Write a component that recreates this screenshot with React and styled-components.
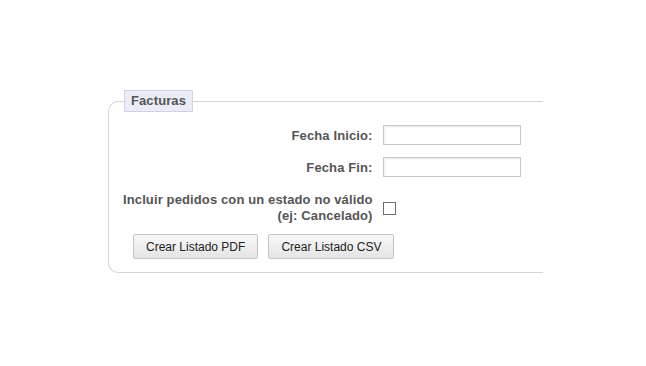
import React from "react";
import styled, { createGlobalStyle } from "styled-components";

const Global = createGlobalStyle`
  html, body { margin: 0; padding: 0; background: #fff; }
  body { font-family: "Liberation Sans", Arial, sans-serif; }
`;

const Page = styled.div`
  padding: 90px 0 0 108px;
`;

const Fieldset = styled.fieldset`
  width: 435px;
  box-sizing: border-box;
  margin: 0;
  padding: 0 0 13px 15px;
  border: 1px solid #d4d4d4;
  border-right: none;
  border-radius: 10px 0 0 10px;
`;

const Legend = styled.legend`
  padding: 2px 6px 3px 6px;
  background: #eaedf5;
  border: 1px solid #cdd3e3;
  color: #555;
  font-size: 13px;
  font-weight: bold;
  line-height: 15px;
  letter-spacing: 0.1px;
`;

const Grid = styled.div`
  display: grid;
  grid-template-columns: max-content auto;
  column-gap: 10px;
  row-gap: 12px;
  align-items: center;
  padding-top: 13px;
  margin-left: -1px;
`;

const Label = styled.label`
  text-align: right;
  color: #555;
  font-size: 13px;
  font-weight: bold;
  line-height: ${(p) => (p.$multi ? "16px" : "15px")};
  margin-top: ${(p) => (p.$multi ? "3px" : "0")};
  letter-spacing: 0.12px;
  white-space: nowrap;
`;

const Input = styled.input`
  width: 138px;
  height: 20px;
  box-sizing: border-box;
  border: 1px solid #c8c8c8;
  box-shadow: inset 1px 1px 2px rgba(0, 0, 0, 0.08);
  margin: 0;
  padding: 0 3px;
  font-family: inherit;
  font-size: 12px;
`;

const Check = styled.span`
  display: block;
  width: 11px;
  height: 11px;
  border: 1px solid #6e6e6e;
  background: #fff;
  margin-top: 3px;
`;

const Buttons = styled.div`
  display: flex;
  gap: 10px;
  padding-left: 9px;
  margin-top: 10px;
`;

const Button = styled.button`
  height: 25px;
  padding: 0 12px;
  border: 1px solid #c3c3c3;
  border-radius: 2px;
  background: linear-gradient(#f8f8f8, #e4e4e4);
  color: #222;
  font-family: "Liberation Sans", Arial, sans-serif;
  font-size: 12px;
  cursor: pointer;
`;

export default function App() {
  return (
    <>
      <Global />
      <Page>
        <Fieldset>
          <Legend>Facturas</Legend>
          <Grid>
            <Label>Fecha Inicio:</Label>
            <Input type="text" />
            <Label>Fecha Fin:</Label>
            <Input type="text" />
            <Label $multi>
              Incluir pedidos con un estado no válido
              <br />
              (ej: Cancelado)
            </Label>
            <Check />
          </Grid>
          <Buttons>
            <Button>Crear Listado PDF</Button>
            <Button>Crear Listado CSV</Button>
          </Buttons>
        </Fieldset>
      </Page>
    </>
  );
}
